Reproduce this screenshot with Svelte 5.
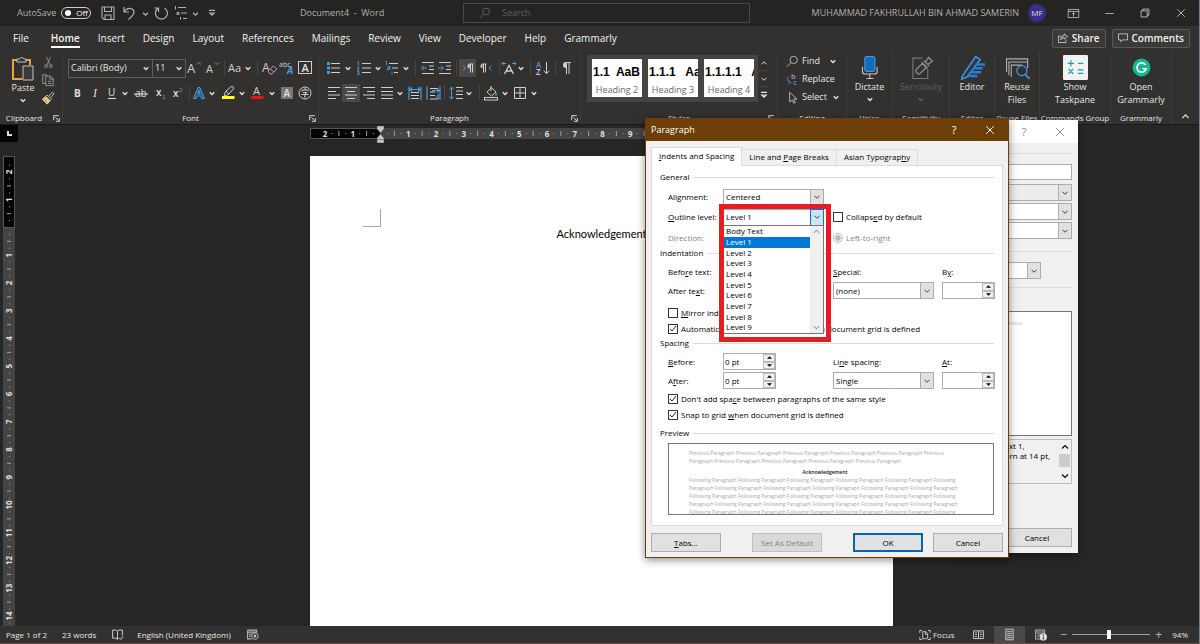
<script>
  const tabs = ['File', 'Home', 'Insert', 'Design', 'Layout', 'References', 'Mailings', 'Review', 'View', 'Developer', 'Help', 'Grammarly'];
  const levels = ['Body Text', 'Level 1', 'Level 2', 'Level 3', 'Level 4', 'Level 5', 'Level 6', 'Level 7', 'Level 8', 'Level 9'];
  const L = 'stroke="#d0cecc" fill="none"';
  const B = 'stroke="#4a9bd8" fill="none"';
  const txt = (s, x, y, size, fill = '#e1dfdd', extra = '') =>
    `<text x="${x}" y="${y}" font-size="${size}" fill="${fill}" font-family="Open Sans, sans-serif" ${extra}>${s}</text>`;

  // each entry is drawn on a 16 x 16 canvas
  const art = {
    grow: txt('A', 0, 13, 13, '#d0cecc') + `<path d="M10 4.500l2-2 2 2" ${B}/>`,
    shrink: txt('A', 1, 13, 11, '#d0cecc') + `<path d="M10 2.500l2 2 2-2" ${B}/>`,
    aa: txt('Aa', 1, 12, 11, '#d0cecc'),
    clear: txt('A', 0, 12, 12, '#d0cecc') + '<path d="M6 11l5-5 4 3-5 5H8z" fill="#323130" stroke="#c586d0"/><path d="M8 9l4 3" stroke="#c586d0"/>',
    phonetic: txt('abc', 0, 7, 7, '#d0cecc') + txt('A', 8, 14, 10, '#4a9bd8', 'font-style="italic" font-weight="700"'),
    charborder: `<rect x="1.500" y="1.500" width="13" height="12" ${L}/>` + txt('A', 4.500, 12, 11, '#e1dfdd', 'font-weight="600"'),
    bold: txt('B', 5, 12, 10, '#e1dfdd', 'font-weight="700"'),
    italic: '<text x="6" y="12" font-size="12" fill="#e1dfdd" font-family="Liberation Serif" font-style="italic">I</text>',
    under: txt('U', 4, 11, 10) + '<path d="M4 13.500h8" stroke="#e1dfdd"/>',
    strike: txt('ab', 2, 12, 10) + '<path d="M1 9h14" stroke="#e1dfdd"/>',
    sub: txt('x', 3, 11, 10, '#e1dfdd', 'font-weight="600"') + txt('2', 9, 14, 6, '#4a9bd8'),
    sup: txt('x', 3, 12, 10, '#e1dfdd', 'font-weight="600"') + txt('2', 9, 7, 6, '#4a9bd8'),
    effects: '<path d="M2.500 13.500L7 2.500h2l4.500 11h-3L9.700 11H6.200l-.8 2.500zM7 8.500h2L8 5.500z" fill="#1d5d94" stroke="#4a9bd8"/>',
    highlight: '<path d="M4 10l2-4 6-5 2 2-5 6-4 2z" fill="none" stroke="#d0cecc"/><path d="M6 6l3 3" stroke="#d0cecc"/><path d="M2 12.500h12.500" stroke="#ffff1a" stroke-width="3"/>',
    color: txt('A', 4, 10, 11, '#d0cecc') + '<path d="M2 12.500h12.500" stroke="#e01818" stroke-width="3"/>',
    shade: '<rect x="2" y="2" width="12" height="12" fill="#797775"/>' + txt('A', 4.500, 12, 10, '#e1dfdd', 'font-weight="600"'),
    enclose: `<circle cx="8" cy="8" r="6" ${L}/><path d="M8 3v2M5 6.500V5h6v1.500M6 7.500h4L8 9v3H7M4.500 9.500h7" ${L}/>`,
    bullets: `<path d="M5 3.500h9M5 8h9M5 12.500h9" ${L}/><path d="M1 2h3v3H1zM1 6.500h3v3H1zM1 11h3v3H1z" fill="#4a9bd8"/>`,
    numbers: `<path d="M6 3.500h9M6 8h9M6 12.500h9" ${L}/><path d="M1 2h1.500v3.500M1 7h2v1.200L1 10h2.500M1 11.500h2v3H1M1.500 13H3" ${B} stroke-width=".9"/>`,
    multi: `<path d="M5 3.500h9M8 8h6M10 12.500h4" ${L}/><path d="M1 1.500h1.500V5M3.500 6.500h2.500V9.500h-2.500V8H6M8 11.500V14.500" ${B} stroke-width=".9"/>`,
    outdent: `<path d="M2 2.500h12M9 6h5M9 9.500h5M2 13.500h12" ${L}/><path d="M7 8H2m2-2.500L1.500 8 4 10.500" ${B}/>`,
    indent: `<path d="M2 2.500h12M9 6h5M9 9.500h5M2 13.500h12" ${L}/><path d="M1 8h5M4 5.500L6.500 8 4 10.500" ${B}/>`,
    ltr: `<path d="M3 5.500L5.500 8 3 10.500" ${B}/><path d="M9 8.500V4h4.500M10.500 4v8.500M12.500 4v8.500" ${L}/><path d="M9.500 4a2 2 0 0 0 0 4.200z" fill="#d0cecc"/>`,
    rtl: `<path d="M13.500 5.500L11 8l2.500 2.500" ${B}/><path d="M4 4h4.500M5.500 4v8.500M7.500 4v8.500" ${L}/><path d="M4.500 4a2 2 0 0 0 0 4.200z" fill="#d0cecc"/>`,
    asian: `<path d="M3.500 14L8 5.500 12.500 14M5 11h6" ${L} stroke-width="1.300"/><path d="M1 3.500h4M3 1.500l-2 2 2 2M11 3.500h4M13 1.500l2 2-2 2" ${B}/>`,
    sort: txt('A', 1, 7.500, 8, '#4a9bd8', 'font-weight="600"') + txt('Z', 1, 15, 8, '#d0cecc', 'font-weight="600"') + `<path d="M11.500 2v11.500M8.700 10.800l2.800 2.800 2.800-2.800" ${L}/>`,
    pilcrow: `<path d="M7 2.500h6M8.500 2.500V14M11 2.500V14" ${L}/><path d="M8 2a3 3 0 0 0 0 6z" fill="#d0cecc"/>`,
    left: `<path d="M2 2.500h12M2 6.500h8M2 10h12M2 13.500h8" ${L}/>`,
    center: `<path d="M2 2.500h12M4 6.500h8M2 10h12M4 13.500h8" ${L}/>`,
    right: `<path d="M2 2.500h12M6 6.500h8M2 10h12M6 13.500h8" ${L}/>`,
    justify: `<path d="M2 2.500h12M2 6.500h12M2 10h12M2 13.500h12" ${L}/>`,
    distribute: `<path d="M4 7.500h8M4 10.500h8M4 13.500h8" ${L}/><path d="M2 1.500v13.500M14 1.500v13.500M3 4.500h10M5 2.500l-2 2 2 2M11 2.500l2 2-2 2" ${B} stroke-width="1.200"/>`,
    lineunit: `<path d="M5 3.500h8M5 7h5M5 10.500h5M5 14h8" ${L}/><path d="M2 1.500v13.500M15 1.500v13.500M7 5.500h7M12 3.500l2 2-2 2M14 9.500l-2 2 2 2" ${B} stroke-width="1.200"/>`,
    spacing: `<path d="M8 2.500h7M8 6h7M8 9.500h7M8 13.500h7" ${L}/><path d="M3.500 2v12M1.500 4.500l2-2.500 2 2.500M1.500 11.500l2 2.500 2-2.500" ${B}/>`,
    fill: `<path d="M4 7l4.500-4.500L13 7l-4.500 4zM8 1v5" ${L}/><path d="M13 7.500v3" ${B} stroke-width="1.500"/><rect x="1.500" y="12.500" width="13" height="2.500" ${L}/>`,
    borders: `<path d="M2.500 2.500h11v11h-11zM8 2.500v11M2.500 8h11" ${L}/>`,
    cut: '<path d="M5.500 1L10 11M10.500 1L6 11" stroke="#a19f9d" fill="none"/><circle cx="5" cy="12.500" r="1.700" stroke="#a19f9d" fill="none"/><circle cx="11" cy="12.500" r="1.700" stroke="#a19f9d" fill="none"/>',
    copy: '<path d="M6 3.500V2H2v10h3.500M5.500 3.500h5l3.500 3v8H5.500zM10 3.500V7h4M8 9.500h4M8 12h4" stroke="#a19f9d" fill="none"/>',
    painter: '<path d="M9 6l4-4.500L15 3l-4 4.500" fill="none" stroke="#d0cecc"/><path d="M7 4.500l5 5-1.500 1.500-5-5z" fill="#323130" stroke="#d0cecc"/><path d="M5 6.500l5 5L7 15l-5.500-5.500z" fill="#f2c46d" stroke="#f0e0b0"/><path d="M3 9l4 4" stroke="#b07a28"/>',
    save: '<path d="M2 2h12v12.500H4L2 12.500zM4.500 2v4.500h7V2M5 14.500V10h6v4.500" fill="none" stroke="#b3b0ad" stroke-width="1.100"/>',
    undo: '<path d="M3 2v5h5M3 7c2-3 5-4.500 8-3 3.500 2 2.500 5.500-3.500 10.500" fill="none" stroke="#b3b0ad" stroke-width="1.200"/>',
    redo: '<path d="M5 3.200A6 6 0 1 0 11.500 3M1.500 3h4v4" fill="none" stroke="#b3b0ad" stroke-width="1.200"/>',
    qlist: '<path d="M2.500 1v3.500M5 2.500h8M4 7.500h2v2H4zM8 8h6M7.500 12v2.500M10 13.500h4" fill="none" stroke="#b3b0ad"/>',
    find: '<circle cx="9.500" cy="6" r="4.500" stroke="#d0cecc" fill="none"/><path d="M6 9.500L1 14.500" stroke="#d0cecc"/>',
    replace: txt('b', 6, 7, 9, '#c586d0', 'font-weight="600"') + txt('c', 9, 15, 9, '#4a9bd8', 'font-weight="600"') + `<path d="M4 4.500C1 6 1 10.500 5 11.500M3.500 9L6 11.500 3.500 14" ${B}/>`,
    select: `<path d="M4.500 1.500v12l3-2.500 2 4 2-1-2-4h4z" ${L}/>`,
    share: '<path d="M6 5.500H2v8.500h10V10M9.500 2.500l4.500 3.500-4.500 3.500V7.500C7 7.500 6 8.500 5 10.500 5 7 7 5 9.500 4.800z" fill="none" stroke="#e1dfdd"/>',
    comment: '<path d="M2 2.500h12v8H7.500L5 13v-2.500H2z" fill="none" stroke="#e1dfdd"/>',
    ribbonopt: '<path d="M1.500 3h13v10h-13zM1.500 5.500h13M8 12V7M6 9l2-2 2 2" fill="none" stroke="#c8c6c4"/>',
    min: '<path d="M2.500 8h11" stroke="#c8c6c4"/>',
    max: '<path d="M3.500 5.500h7v7h-7zM5.500 5.500v-2h7v7h-2" fill="none" stroke="#c8c6c4"/>',
    close: '<path d="M3 3l10 10M13 3L3 13" stroke="currentColor" stroke-width="1.300"/>',
    chev: '<path d="M5 7l3 3 3-3" fill="none" stroke="currentColor" stroke-width="1.700"/>',
    up: '<path d="M4 10l4-4 4 4" fill="none" stroke="currentColor" stroke-width="1.500"/>',
    down: '<path d="M4 6l4 4 4-4" fill="none" stroke="currentColor" stroke-width="1.500"/>',
    more: '<path d="M4 4.500h8M5 8l3 3 3-3z" fill="none" stroke="currentColor" stroke-width="1.500"/>',
    launch: '<path d="M3 11V3h9M6 6l6 6M13 7v6H7" fill="none" stroke="#e1dfdd" stroke-width="1.700"/>',
    proof: '<path d="M8 4L6 2.500H2v10h4l2 1.500 1-1M8 4l2-1.500h4V9M8 4v10M10 12l2 2 3-4" fill="none" stroke="#d0cecc" stroke-width="1.200"/>',
    macro: '<path d="M2 2.500h11v3M2 2.500v11h5M2 5h11M4 7.500h3M4 10h2" fill="none" stroke="#b3b0ad" stroke-width="1.500"/><circle cx="11" cy="10" r="4" fill="none" stroke="#d0cecc"/><circle cx="11" cy="10" r="1.600" fill="#d0cecc"/>',
    focus: '<path d="M1 5V2h3M12 2h3v3M15 11v3h-3M4 14H1v-3M5 3.500h4l2.500 2.500v7H5zM8.500 3.500V7h3" fill="none" stroke="#d0cecc" stroke-width="1.200"/>',
    read: '<path d="M8 3.500H2v9.500h6zM8 3.500h6v9.500H8zM4 6h2M4 8h2M4 10.500h2M10 6h2M10 8h2M10 10.500h2" fill="none" stroke="#d0cecc" stroke-width="1.200"/>',
    print: '<path d="M3.500 1.500h9v13h-9zM5 4.500h6M5 7h6M5 9.500h6M5 12h6" fill="none" stroke="#d0cecc" stroke-width="1.200"/>',
    web: '<path d="M2 2.500h11v11H2zM2 5h11M4 7.500h5M4 10h3" fill="none" stroke="#b3b0ad" stroke-width="1.300"/><circle cx="11.500" cy="11" r="4.500" fill="#e1dfdd"/><path d="M11.500 8v2M11.500 11v3" stroke="#323130" stroke-width="1.300"/>',
    dictate: '<rect x="5" y="1" width="6.500" height="9.500" rx="1" fill="#0f6cc0" stroke="#67b0ee" stroke-width=".5"/><path d="M3.500 7.500v3c0 1 .8 1.700 1.700 1.700h6c1 0 1.700-.7 1.700-1.700v-3M8.200 12.500v2.300M6 15h4.500" fill="none" stroke="#c8c6c4" stroke-width=".7"/>',
    sensitivity: '<path d="M8.500 2H2.500v13h9.500V9" fill="none" stroke="#7a7876" stroke-width=".7"/><path d="M4.500 9.500l4-4 2.500 2.500-4 4c-1 .8-3.300-1.300-2.500-2.500zM8 4.500l4 4M9.500 3.500l3.500 3.500M10.500 4.500l2-3 2.500 2.500-3 2" fill="none" stroke="#8a8886" stroke-width=".9"/>',
    editor: '<path d="M1.500 13.500L10 1l3 2-8.500 11-3.500 1.500z" fill="#2b3a48" stroke="#3f9be8" stroke-width=".9"/><path d="M10 6h6M8.500 8.500h6M6.500 11h7M5 13.500h6" stroke="#2b7cd3" stroke-width="1.600"/>',
    reuse: '<path d="M1 11V2.500h13.500V7M2.500 13V4.500h12v4M4 14V6.500h7" fill="none" stroke="#b3b0ad" stroke-width=".7"/><circle cx="10.800" cy="10" r="3.200" fill="#323130" stroke="#3f9be8" stroke-width=".8"/><path d="M13 12.500l2.800 2.800" stroke="#3f9be8"/>',
    taskpane: '<rect width="16" height="16" rx=".8" fill="#f3f2f1"/><path d="M3 5.300h4M5 3.300v4M9.500 5.300h3.500M3.500 9l3 3M6.500 9l-3 3M9.500 9.500h3.500M9.500 11.800h3.500" stroke="#1b9fc4" stroke-width=".8"/>',
    grammarly: '<circle cx="8" cy="8" r="5.700" fill="#11b98d"/><path d="M10.500 6.200A3 3 0 1 0 11 8.800H8.700" fill="none" stroke="#fff" stroke-width="1.100"/>'
  };

  // [icon, width, pressed]; '|' is a separator
  const fontTop = [['grow', 18], ['shrink', 18], ['|', 4], ['aa', 18], ['chev', 8], ['|', 10], ['clear', 15], ['phonetic', 19], ['charborder', 17]];
  const fontBottom = [['bold', 18], ['italic', 18], ['under', 16], ['chev', 10], ['strike', 22], ['sub', 18], ['sup', 16], ['|', 6], ['effects', 14], ['chev', 12], ['highlight', 20], ['chev', 8], ['color', 22], ['chev', 8], ['shade', 22], ['enclose', 14]];
  const paraTop = [['bullets', 16], ['chev', 12], ['numbers', 20], ['chev', 8], ['multi', 20], ['chev', 8], ['|', 10], ['outdent', 16], ['indent', 18], ['|', 5], ['ltr', 17, true], ['rtl', 20], ['|', 6], ['asian', 14], ['chev', 10], ['|', 8], ['sort', 18], ['|', 6], ['pilcrow', 16]];
  const paraBottom = [['left', 16], ['center', 18, true], ['right', 18], ['justify', 18], ['chev', 8], ['distribute', 22], ['lineunit', 14], ['|', 9], ['spacing', 14], ['chev', 12], ['|', 8], ['fill', 16], ['chev', 12], ['borders', 18], ['chev', 10]];
  const big = [
    { icon: 'dictate', a: 'Dictate', chev: true, label: 'Voice', w: 46 },
    { icon: 'sensitivity', a: 'Sensitivity', chev: true, label: 'Sensitivity', w: 57, off: true },
    { icon: 'editor', a: 'Editor', label: 'Editor', w: 45 },
    { icon: 'reuse', a: 'Reuse', b: 'Files', label: 'Reuse Files', w: 45 },
    { icon: 'taskpane', a: 'Show', b: 'Taskpane', label: 'Commands Group', w: 71 },
    { icon: 'grammarly', a: 'Open', b: 'Grammarly', label: 'Grammarly', w: 61 }
  ];
  const gallery = [['1.1  AaB', 'Heading 2'], ['1.1.1   Aa', 'Heading 3'], ['1.1.1.1   A', 'Heading 4']];
  const unit = 27.75;
  const hTicks = Array.from({ length: 82 }, (_, i) => i - 8).filter((k) => k % 4);
  const hNums = [-2, -1, ...Array.from({ length: 18 }, (_, i) => i + 1)];
  const vTicks = Array.from({ length: 67 }, (_, i) => i - 9).filter((k) => k % 4);
  const vNums = [-2, -1, ...Array.from({ length: 14 }, (_, i) => i + 1)];
  const prev = 'Previous Paragraph ';
  const foll = 'Following Paragraph ';
</script>

{#snippet ic(name, size = 16)}
  <svg class="ic" width={size} height={size} viewBox="0 0 16 16" aria-hidden="true">{@html art[name]}</svg>
{/snippet}

{#snippet tools(items)}
  {#each items as [name, w, on]}
    {#if name === '|'}
      <span class="vsep" style:width="{w}px"></span>
    {:else}
      <button class="tool" class:on style:width="{w}px" aria-label={name}>{@render ic(name, name === 'chev' ? 12 : 16)}</button>
    {/if}
  {/each}
{/snippet}

{#snippet combo(id, value, off = false)}
  <span class="combo" class:off>
    <select {id} disabled={off}><option>{value}</option></select>
    <span class="arrow">{@render ic('down', 10)}</span>
  </span>
{/snippet}

{#snippet spin(id, value)}
  <span class="spin">
    <input {id} type="text" {value} />
    <span class="steps">
      <button aria-label="Increase"><svg width="5" height="3" viewBox="0 0 6 3"><path d="M0 3l3-3 3 3z" /></svg></button>
      <button aria-label="Decrease"><svg width="5" height="3" viewBox="0 0 6 3"><path d="M0 0h6L3 3z" /></svg></button>
    </span>
  </span>
{/snippet}

<div class="app">
  <header class="title">
    <div class="quick">
      <span>AutoSave</span>
      <button class="toggle"><i></i>Off</button>
      <button class="q save" aria-label="Save">{@render ic('save')}</button>
      <button class="q undo" aria-label="Undo">{@render ic('undo')}</button>
      <button class="q small" aria-label="Undo list">{@render ic('chev', 13)}</button>
      <button class="q redo" aria-label="Redo">{@render ic('redo')}</button>
      <button class="q" aria-label="List">{@render ic('qlist')}</button>
      <button class="q small" aria-label="List options">{@render ic('chev', 13)}</button>
      <button class="q last" aria-label="Customize">{@render ic('more', 12)}</button>
    </div>
    <div class="doc">Document4&nbsp; - &nbsp;Word</div>
    <label class="search">{@render ic('find', 12)}<input type="text" placeholder="Search" aria-label="Search" /></label>
    <div class="account">
      <span>MUHAMMAD FAKHRULLAH BIN AHMAD SAMERIN</span>
      <span class="avatar">MF</span>
      <button class="q win" aria-label="Ribbon options">{@render ic('ribbonopt', 13)}</button>
      <button class="q win" aria-label="Minimize">{@render ic('min', 13)}</button>
      <button class="q win" aria-label="Restore">{@render ic('max', 14)}</button>
      <button class="q win" aria-label="Close">{@render ic('close', 12)}</button>
    </div>
  </header>

  <nav class="tabs">
    {#each tabs as t}
      <button class:active={t === 'Home'}>{t}</button>
    {/each}
    <span class="grow"></span>
    <button class="pill">{@render ic('share', 12)}Share</button>
    <button class="pill">{@render ic('comment', 12)}Comments</button>
  </nav>

  <section class="ribbon">
    <div class="group clip">
      <div class="body cliprow">
        <button class="paste">
          <svg width="24" height="26" viewBox="0 0 24 26" aria-hidden="true">
            <path d="M6 4H2v19h9M15 4h4v5" fill="none" stroke="#e8a33d" stroke-width="2" />
            <path d="M6 6V3h2.500a2.500 2.500 0 0 1 4.500 0H15v3z" fill="#323130" stroke="#c8c6c4" />
            <path d="M12 10h10v14H12z" fill="#3b3a39" stroke="#c8c6c4" />
          </svg>
          <span>Paste</span>
          {@render ic('chev', 12)}
        </button>
        <div class="stack">
          <button class="tool" aria-label="Cut">{@render ic('cut', 13)}</button>
          <button class="tool" aria-label="Copy">{@render ic('copy', 14)}</button>
          <button class="tool" aria-label="Format painter">{@render ic('painter', 14)}</button>
        </div>
      </div>
      <div class="label">Clipboard<button class="launch" aria-label="Clipboard options">{@render ic('launch', 9)}</button></div>
    </div>

    <div class="group font">
      <div class="body rows">
        <div class="row">
          <button class="pick name">Calibri (Body){@render ic('chev', 12)}</button>
          <button class="pick size">11{@render ic('chev', 12)}</button>
          {@render tools(fontTop)}
        </div>
        <div class="row">{@render tools(fontBottom)}</div>
      </div>
      <div class="label">Font<button class="launch" aria-label="Font options">{@render ic('launch', 9)}</button></div>
    </div>

    <div class="group para">
      <div class="body rows">
        <div class="row">{@render tools(paraTop)}</div>
        <div class="row">{@render tools(paraBottom)}</div>
      </div>
      <div class="label">Paragraph<button class="launch" aria-label="Paragraph options">{@render ic('launch', 9)}</button></div>
    </div>

    <div class="group styles">
      <div class="body">
        <div class="gallery">
          {#each gallery as [sample, name]}
            <button class="tile"><b>{sample}</b><span>{name}</span></button>
          {/each}
          <div class="scroll">
            <button aria-label="Up">{@render ic('up', 10)}</button>
            <button aria-label="Down">{@render ic('down', 10)}</button>
            <button aria-label="More">{@render ic('more', 12)}</button>
          </div>
        </div>
      </div>
      <div class="label">Styles<button class="launch" aria-label="Styles options">{@render ic('launch', 9)}</button></div>
    </div>

    <div class="group editing">
      <div class="body edit">
        <button>{@render ic('find', 13)}Find<span class="far">{@render ic('chev', 12)}</span></button>
        <button>{@render ic('replace', 13)}Replace</button>
        <button>{@render ic('select', 13)}Select{@render ic('chev', 12)}</button>
      </div>
      <div class="label">Editing</div>
    </div>

    {#each big as g}
      <div class="group" style:width="{g.w}px">
        <div class="body">
          <button class="big" class:off={g.off}>
            {@render ic(g.icon, 25)}
            <span>{g.a}</span>
            {#if g.chev}{@render ic('chev', 12)}{:else}<span>{g.b ?? ''}</span>{/if}
          </button>
        </div>
        <div class="label">{g.label}</div>
      </div>
    {/each}
    <button class="collapse" aria-label="Collapse ribbon">{@render ic('up', 13)}</button>
  </section>

  <main class="work">
    <div class="corner"><i></i></div>
    <div class="hruler">
      <svg width="583" height="18" viewBox="0 0 583 18">
        <rect y="3" width="583" height="11" fill="#454443" />
        <rect x="0.500" y="3.500" width="70" height="10" fill="#050505" stroke="#555" />
        {#each hNums as n}<text x={70.5 + n * unit} y="12" text-anchor="middle">{Math.abs(n)}</text>{/each}
        {#each hTicks as k}<rect x={70 + (k * unit) / 4} y={k % 2 ? 8 : 6} width="1" height={k % 2 ? 1 : 5} fill="#a19f9d" />{/each}
        <path d="M67 1h7v3l-3.500 4L67 4zM67 18v-5l3.500-4 3.500 4v5zM67 14.500h7" fill="#c8c6c4" stroke="#444" stroke-width=".5" />
      </svg>
    </div>
    <div class="vruler">
      <svg width="12" height="471" viewBox="0 0 12 471">
        <rect width="12" height="471" fill="#454443" />
        <rect x="0.500" y="0.500" width="11" height="71" fill="#050505" stroke="#555" />
        {#each vNums as n}<text transform="translate(9 {71.5 + n * unit}) rotate(-90)" text-anchor="middle">{Math.abs(n)}</text>{/each}
        {#each vTicks as k}<rect x={k % 2 ? 6 : 4} y={71 + (k * unit) / 4} width={k % 2 ? 1 : 4} height="1" fill="#a19f9d" />{/each}
      </svg>
    </div>
    <div class="desk">
      <article class="page">
        <i class="crop"></i>
        <p>Acknowledgement</p>
      </article>
    </div>
  </main>

  <footer class="status">
    <span>Page 1 of 2</span>
    <span>23 words</span>
    <span class="mini">{@render ic('proof', 13)}</span>
    <span>English (United Kingdom)</span>
    <span class="mini">{@render ic('macro', 13)}</span>
    <span class="grow"></span>
    <button class="focus">{@render ic('focus', 12)}Focus</button>
    <button class="view" aria-label="Read mode">{@render ic('read', 13)}</button>
    <button class="view on" aria-label="Print layout">{@render ic('print', 13)}</button>
    <button class="view" aria-label="Web layout">{@render ic('web', 13)}</button>
    <button class="zoombtn out" aria-label="Zoom out">−</button>
    <input class="zoom" type="range" min="0" max="100" value="47" aria-label="Zoom" />
    <button class="zoombtn" aria-label="Zoom in">+</button>
    <span class="pct">94%</span>
  </footer>

  <section class="dialog back">
    <div class="bar"><button aria-label="Help">?</button><button aria-label="Close">{@render ic('close', 12)}</button></div>
    <div class="backbody">
      <hr />
      <input class="plain" type="text" aria-label="Name" />
      <div class="combos">
        {@render combo('b1', '', true)}
        {@render combo('b2', '')}
        {@render combo('b3', '')}
      </div>
      <hr />
      <div class="narrow">{@render combo('b4', '')}</div>
      <hr />
      <div class="sheet">Previous</div>
      <div class="desc">
        <p>Text 1,<br />Kern at 14 pt,</p>
        <div class="sb">{@render ic('up', 12)}<i></i>{@render ic('down', 12)}</div>
      </div>
      <button class="btn">Cancel</button>
    </div>
  </section>

  <section class="dialog front">
    <div class="bar"><h1>Paragraph</h1><button aria-label="Help">?</button><button aria-label="Close">{@render ic('close', 12)}</button></div>
    <div class="dbody">
      <div class="dtabs">
        <button class="cur"><u>I</u>ndents and Spacing</button>
        <button>Line and <u>P</u>age Breaks</button>
        <button>Asian Typograp<u>h</u>y</button>
      </div>
      <div class="panel">
        <h2>General</h2>
        <div class="form general">
          <label for="al">Ali<u>g</u>nment:</label>
          {@render combo('al', 'Centered')}
          <span></span>
          <label for="ol"><u>O</u>utline level:</label>
          <span class="open">
            {@render combo('ol', 'Level 1')}
            <span class="drop">
              <ul role="listbox" aria-label="Outline level">
                {#each levels as l, i}<li role="option" aria-selected={i === 1}>{l}</li>{/each}
              </ul>
              <span class="dropbar">{@render ic('up', 11)}{@render ic('down', 11)}</span>
            </span>
          </span>
          <label class="check"><input type="checkbox" /><span>Collaps<u>e</u>d by default</span></label>
          <span class="dim">Direction:</span>
          <span></span>
          <label class="check dim"><input type="radio" checked disabled />Left-to-right</label>
        </div>
        <h2>Indentation</h2>
        <div class="form pair">
          <label for="bt">Befo<u>r</u>e text:</label>
          {@render spin('bt', '')}
          <label for="sp"><u>S</u>pecial:</label>
          <label for="by">B<u>y</u>:</label>
          <label for="at">After te<u>x</u>t:</label>
          {@render spin('at', '')}
          {@render combo('sp', '(none)')}
          {@render spin('by', '')}
        </div>
        <div class="checks first">
          <label class="check"><input type="checkbox" /><span><u>M</u>irror indents</span></label>
          <label class="check"><input type="checkbox" checked /><span>Automatically a<u>d</u>just right indent when document grid is defined</span></label>
        </div>
        <h2>Spacing</h2>
        <div class="form pair">
          <label for="sb"><u>B</u>efore:</label>
          {@render spin('sb', '0 pt')}
          <label for="ls">Li<u>n</u>e spacing:</label>
          <label for="la"><u>A</u>t:</label>
          <label for="sa">A<u>f</u>ter:</label>
          {@render spin('sa', '0 pt')}
          {@render combo('ls', 'Single')}
          {@render spin('la', '')}
        </div>
        <div class="checks">
          <label class="check"><input type="checkbox" checked /><span>Don't add spa<u>c</u>e between paragraphs of the same style</span></label>
          <label class="check"><input type="checkbox" checked /><span>Snap to grid <u>w</u>hen document grid is defined</span></label>
        </div>
        <h2 class="ph">Preview</h2>
        <div class="preview">
          <p>{prev.repeat(5)}Previous<br />Paragraph {prev.repeat(4)}</p>
          <p class="me">Acknowledgement</p>
          <p>{foll.repeat(5)}Following<br />Paragraph {foll.repeat(5)}<br />{foll.repeat(5)}Following<br />Paragraph {foll.repeat(5)}<br />{foll.repeat(5)}Following</p>
        </div>
      </div>
      <div class="actions">
        <button class="btn"><u>T</u>abs...</button>
        <button class="btn" disabled>Set As Default</button>
        <button class="btn ok">OK</button>
        <button class="btn">Cancel</button>
      </div>
    </div>
    <span class="mark"></span>
  </section>
</div>

<style>
  :global(body) { margin: 0; background: #262626; }
  .app, .app * { box-sizing: border-box; }
  .app {
    position: relative;
    display: flex;
    flex-direction: column;
    height: 100vh;
    overflow: hidden;
    background: #262626;
    border-right: 1px solid #6a7f98;
    border-bottom: 1px solid #5c504c;
    color: #e8e6e4;
    font: 9px/12px "Open Sans", "Noto Sans", sans-serif;
  }
  button { font: inherit; color: inherit; background: none; border: 0; padding: 0; margin: 0; }
  input, select { font: inherit; color: inherit; }
  .ic { flex: none; display: block; }
  .grow { flex: 1; }

  .title { flex: none; display: grid; grid-template-columns: 300px 163px minmax(0, 1fr) 449px; align-items: center; height: 26px; background: #252423; color: #b3b0ad; }
  .quick { display: flex; align-items: center; padding-left: 17px; }
  .toggle { display: flex; align-items: center; gap: 5px; width: 30px; height: 12px; margin: 0 8px 0 5px; padding-left: 3px; border: 1px solid #d0cecc; border-radius: 6px; color: #fff; font-size: 8px; line-height: 10px; }
  .toggle i { width: 6px; height: 6px; border-radius: 50%; background: #fff; }
  .q { display: flex; justify-content: center; align-items: center; width: 20px; height: 20px; }
  .q.save { width: 18px; }
  .q.undo { width: 24px; }
  .q.small { width: 8px; }
  .q.redo { margin-left: 2px; }
  .q.last { margin-left: 3px; }
  .search { display: flex; align-items: center; gap: 11px; height: 20px; padding-left: 15px; border: 1px solid #4a4948; color: #605e5c; }
  .search :global(svg) { opacity: .45; }
  .search input { flex: 1; min-width: 0; border: 0; padding: 0; background: none; outline: 0; }
  .search input::placeholder { color: #605e5c; }
  .account { display: flex; align-items: center; justify-content: flex-end; }
  .avatar { display: grid; place-items: center; width: 18px; height: 18px; margin: 0 9px; border-radius: 50%; background: #37308a; color: #e1dfdd; font-size: 8px; }
  .win { width: 36px; }

  .tabs { flex: none; display: flex; align-items: center; gap: 18px; height: 26px; padding: 0 9px 2px 13px; background: #323130; font-size: 10px; line-height: 14px; }
  .tabs button { position: relative; color: #f3f2f1; }
  .tabs button:first-child { margin-right: 4px; }
  .tabs .active { font-weight: 600; }
  .tabs .active::after { content: ""; position: absolute; inset: auto 0 -3px 0; height: 2px; background: #fff; }
  .tabs .pill { display: flex; align-items: center; justify-content: center; gap: 3px; height: 19px; padding: 0 5px 0 4px; border: 1px solid #5a5856; border-radius: 2px; background: #3b3a39; font-weight: 600; }
  .pill + .pill { margin-left: -12px; }

  .ribbon { flex: none; display: flex; height: 73px; background: #323130; border-bottom: 1px solid #1b1a19; }
  .group { flex: none; display: flex; flex-direction: column; border-right: 1px solid #3e3d3b; }
  .body { height: 60px; }
  .label { position: relative; text-align: center; font-size: 8px; line-height: 12px; white-space: nowrap; display: flex; justify-content: center; }
  .launch { position: absolute; right: 1px; top: 2px; }
  .clip { width: 63px; }
  .clip .label { padding-right: 14px; }
  .font { width: 256px; }
  .para { width: 262px; }
  .styles { width: 197px; }
  .editing { width: 69px; }
  .cliprow { display: flex; }
  .paste { display: flex; flex-direction: column; align-items: center; width: 36px; margin-left: 5px; padding-top: 4px; }
  .stack { display: flex; flex-direction: column; gap: 2px; padding-top: 2px; }
  .stack .tool { width: 14px; height: 16px; }
  .rows { display: flex; flex-direction: column; gap: 7px; padding: 7px 0 0 5px; }
  .para .rows { padding-left: 7px; }
  .row { display: flex; align-items: center; height: 18px; }
  .tool { flex: none; display: flex; justify-content: center; align-items: center; height: 18px; }
  .tool.on { background: #4a4948; }
  .vsep { flex: none; height: 16px; background: linear-gradient(#454443, #454443) center / 1px 100% no-repeat; }
  .pick { flex: none; display: flex; align-items: center; justify-content: space-between; height: 19px; padding-left: 2px; border: 1px solid #605e5c; white-space: nowrap; }
  .pick.name { width: 85px; }
  .pick.size { width: 34px; margin-left: -1px; }
  .gallery { display: flex; gap: 6px; width: 183px; margin: 3px 0 0 6px; padding: 4px 0 0 5px; height: 47px; background: #454443; }
  .tile { width: 50px; height: 38px; overflow: hidden; background: #fff; display: flex; flex-direction: column; align-items: center; padding-top: 5px; white-space: nowrap; }
  .tile b { align-self: flex-start; padding-left: 1px; color: #000; font: bold 12px/16px "Liberation Sans", Arial, sans-serif; white-space: pre; }
  .tile span { color: #666; line-height: 14px; padding-top: 3px; }
  .scroll { display: flex; flex-direction: column; gap: 1px; width: 12px; margin: -4px 0 0 -2px; }
  .scroll button { flex: 1; display: grid; place-items: center; background: #323130; }
  .edit { display: flex; flex-direction: column; padding: 0 0 0 8px; }
  .edit button { display: flex; align-items: center; gap: 3px; height: 18px; }
  .edit .far { margin-left: 4px; }
  .big { display: flex; flex-direction: column; align-items: center; width: 100%; padding-top: 3px; }
  .big span { min-height: 12px; line-height: 12px; padding-top: 1px; }
  .big.off { color: #605e5c; }
  .collapse { flex: 1; display: flex; justify-content: center; align-items: flex-end; padding-bottom: 1px; }

  .work { flex: 1; min-height: 0; display: grid; grid-template: 31px minmax(0, 1fr) / 18px minmax(0, 1fr) 14px; overflow: hidden; }
  .corner { width: 18px; height: 17px; background: #050505; display: grid; place-items: center; }
  .corner i { width: 5px; height: 5px; border: solid #e1dfdd; border-width: 0 0 2px 2px; }
  .hruler { grid-column: 2; display: flex; justify-content: center; }
  .vruler { grid-area: 2 / 1; padding-left: 3px; overflow: hidden; }
  .hruler text, .vruler text { font: bold 8px "Open Sans", sans-serif; fill: #e1dfdd; }
  .desk { grid-area: 2 / 2; display: flex; justify-content: center; }
  .page { width: 583px; background: #fff; color: #000; }
  .crop { display: block; width: 18px; height: 18px; margin: 53px 0 0 53px; border: solid #a6a6a6; border-width: 0 1px 1px 0; }
  .page p { margin: 0; text-align: center; font: 11px/14px Lato, "Open Sans", sans-serif; }

  .status { flex: none; display: flex; align-items: center; height: 17px; padding: 0 11px 0 6px; gap: 15px; background: #323130; font-size: 8px; }
  .status button { display: flex; align-items: center; justify-content: center; }
  .mini { margin: 0 -2px 0 0; }
  .focus { gap: 2px; }
  .status .view { width: 31px; height: 17px; margin-left: -15px; }
  .status .focus + .view { margin-left: -6px; }
  .status .view.on { background: #4a4948; }
  .zoombtn { font-size: 12px; color: #b3b0ad; }
  .status .zoombtn.out { margin-left: -11px; }
  .zoom { appearance: none; width: 78px; height: 12px; margin: 0 -10px; background: linear-gradient(#a19f9d, #a19f9d) center / 100% 1px no-repeat; }
  .zoom::-webkit-slider-thumb { appearance: none; width: 4px; height: 9px; background: #fff; }
  .pct { margin-left: -5px; }

  .dialog { position: absolute; background: #f0f0f0; color: #000; font-size: 8px; line-height: 12px; box-shadow: 0 2px 8px rgba(0, 0, 0, .45); }
  .bar { display: flex; align-items: center; height: 23px; }
  .bar h1 { flex: 1; margin: 0; padding-left: 5px; font: 9px/12px "Open Sans", sans-serif; }
  .bar button { width: 36px; height: 22px; display: grid; place-items: center; font-size: 11px; }
  .back { left: 958px; top: 120px; width: 120px; height: 433px; }
  .back .bar { background: #fff; justify-content: flex-end; color: #8a8886; }
  .backbody { padding: 10px 6px 0 0; }
  hr { margin: 0; border: 0; border-top: 1px solid #dcdcdc; }
  .plain { display: block; width: 100%; height: 16px; margin: 10px 0 4px; border: 1px solid #acacac; background: #fff; }
  .combos { display: flex; flex-direction: column; gap: 2px; height: 67px; }
  .narrow { width: 83px; margin: 10px 0 8px; }
  .sheet { height: 125px; margin-top: 23px; padding: 5px 49px 0 0; border: 1px solid #767676; background: #fff; color: #bbb; text-align: right; font-size: 5px; }
  .desc { display: flex; justify-content: space-between; height: 45px; margin-top: 3px; border: 1px solid #bcbcbc; }
  .desc p { margin: 1px 0 0 41px; line-height: 10px; white-space: nowrap; }
  .sb { display: flex; flex-direction: column; align-items: center; justify-content: space-between; width: 13px; padding: 1px 0; }
  .sb i { width: 11px; height: 13px; margin-bottom: 3px; background: #cdcdcd; }
  .back .btn { display: block; margin: 44px 0 0 auto; }

  .front { left: 645px; top: 118px; width: 364px; border: 1px solid #6b3f06; border-top: 0; }
  .front .bar { background: #6b3f06; color: #fff; }
  .dbody { padding: 6px 5px 5px; }
  .dtabs { display: flex; align-items: flex-end; height: 18px; }
  .dtabs button { height: 16px; padding: 0 7px 2px; border: 1px solid #dcdcdc; border-width: 1px 1px 0 0; white-space: nowrap; }
  .dtabs .cur { height: 19px; margin-bottom: -1px; background: #fff; border-left-width: 1px; }
  .panel { width: 352px; padding: 6px 8px 10px; background: #fff; border: 1px solid #dcdcdc; }
  h2 { display: flex; align-items: center; gap: 4px; height: 10px; margin: 0; font: 8px/10px "Open Sans", sans-serif; }
  h2::after { content: ""; flex: 1; height: 1px; background: #dcdcdc; }
  .form { display: grid; padding-left: 8px; align-items: center; white-space: nowrap; }
  .general { margin-top: 6px; grid-template: 18px 22px 20px / 55px 110px 1fr; }
  .pair { margin: 4px 0 1px; grid-template: 19px 19px / 55px 110px 109px 53px; }
  .dim { color: #838383; }
  .combo { display: flex; width: 101px; height: 17px; border: 1px solid #acacac; background: #fff; }
  .back .combo { width: 100%; }
  .combo select { flex: 1; min-width: 0; appearance: none; border: 0; padding: 0 2px; background: none; outline: 0; }
  .combo .arrow { display: grid; place-items: center; width: 13px; background: #e1e1e1; border-left: 1px solid #acacac; color: #333; }
  .combo.off { background: #ededed; }
  .open { position: relative; }
  .open .arrow { background: #cce4f7; border: 1px solid #0078d7; margin: -1px; width: 14px; }
  .drop { position: absolute; z-index: 2; left: 0; top: 16px; width: 101px; display: flex; border: 1px solid #767676; background: #fff; }
  .drop ul { flex: 1; margin: 0; padding: 0; list-style: none; }
  .drop li { height: 11px; padding-left: 2px; line-height: 10px; }
  .drop li:nth-child(3n) { height: 10px; }
  .drop li[aria-selected="true"] { background: #0078d7; color: #fff; }
  .dropbar { display: flex; flex-direction: column; justify-content: space-between; align-items: center; width: 13px; background: #f0f0f0; color: #a0a0a0; }
  .check { display: flex; align-items: center; gap: 3px; }
  .check input { appearance: none; width: 10px; height: 10px; margin: 0; border: 1px solid #333; background: #fff; }
  .check input[type="checkbox"]:checked { background: url("data:image/svg+xml,%3Csvg xmlns='http://www.w3.org/2000/svg' viewBox='0 0 8 8'%3E%3Cpath d='M1 4l2 2 4-5' fill='none' stroke='%23222'/%3E%3C/svg%3E"); }
  .check input[type="radio"] { border-radius: 50%; border-color: #bcbcbc; background: radial-gradient(#bcbcbc 45%, #fff 55%); }
  .checks { padding-left: 8px; white-space: nowrap; }
  .checks .check { height: 16px; }
  .checks.first { padding-top: 4px; padding-bottom: 1px; }
  .spin { display: flex; width: 53px; height: 17px; border: 1px solid #acacac; background: #fff; }
  .spin input { flex: 1; min-width: 0; width: 0; padding: 0 1px; border: 0; outline: 0; background: none; }
  .steps { display: flex; flex-direction: column; width: 12px; padding: 0; }
  .steps button { flex: 1; display: grid; place-items: center; background: #f0f0f0; border: 1px solid #bcbcbc; }
  .ph { margin-top: 5px; }
  .preview { height: 72px; margin: 5px 0 0 8px; padding: 5px 20px; overflow: hidden; border: 1px solid #767676; color: #a8a8a8; font-size: 5px; line-height: 8px; white-space: nowrap; }
  .preview p { margin: 0; }
  .preview .me { margin-top: 3px; padding-right: 12px; text-align: center; color: #111; font-weight: 600; }
  .actions { display: flex; margin-top: 7px; }
  .btn { width: 70px; height: 19px; border: 1px solid #adadad; background: #e1e1e1; }
  .actions .btn { margin-right: 31px; }
  .actions .ok { margin-right: 10px; border: 2px solid #0067b8; }
  .actions .btn:last-child { margin-right: 0; }
  .btn:disabled { color: #838383; border-color: #bfbfbf; background: #d9d9d9; }
  .mark { position: absolute; z-index: 3; left: 73px; top: 86px; width: 112px; height: 138px; border: 5px solid #e81c23; }
</style>
